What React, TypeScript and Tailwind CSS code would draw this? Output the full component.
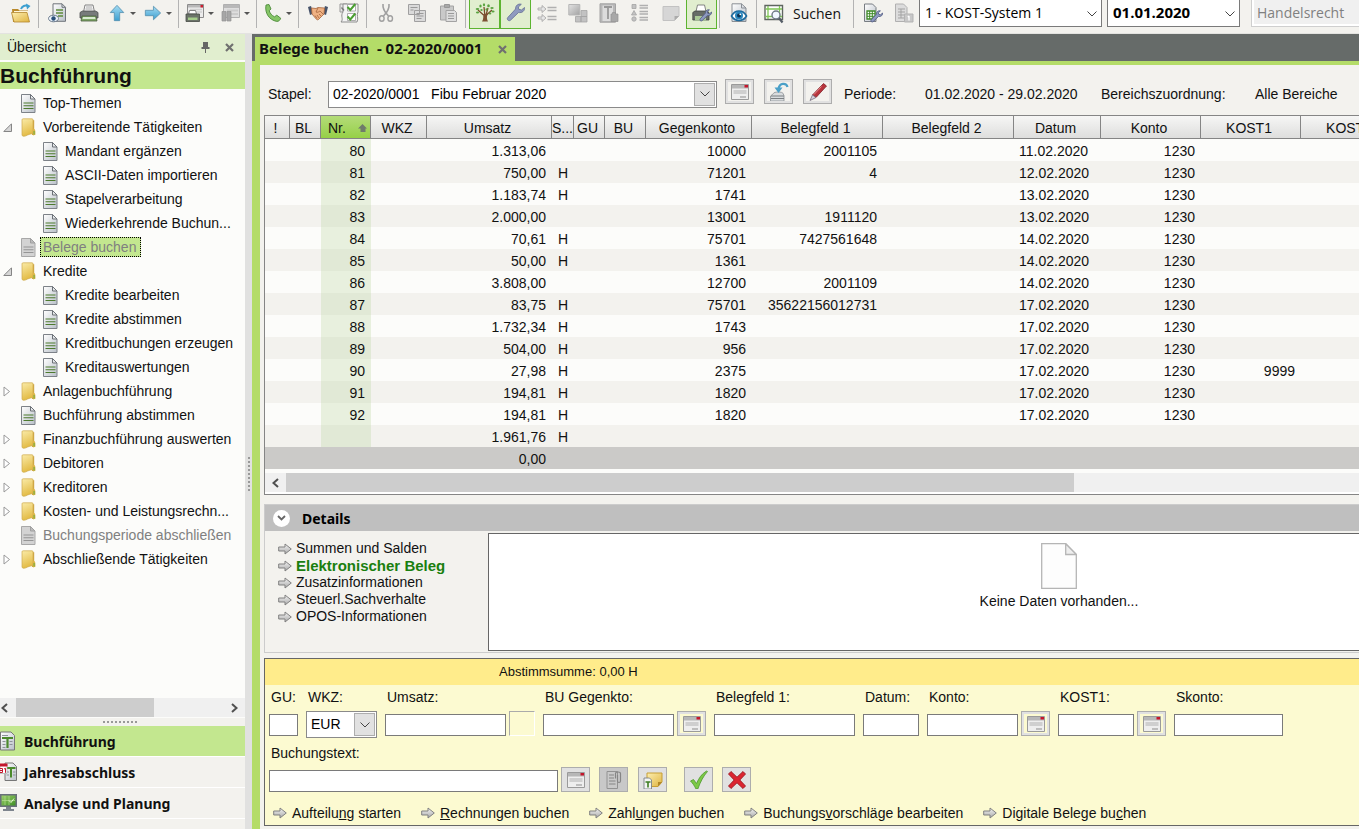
import React from "react";
import type { ReactNode } from "react";
import { clsx } from "clsx";

/* ---------- Icons ---------- */

function Svg({ size = 20, children, box = "0 0 20 20" }: { size?: number; children: ReactNode; box?: string }) {
  return (
    <svg width={size} height={size} viewBox={box} aria-hidden="true" className="block shrink-0" fill="none">
      {children}
    </svg>
  );
}

function Gradients() {
  return (
    <svg width="0" height="0" className="absolute" aria-hidden="true">
      <defs>
        <linearGradient id="paper" x1="0" y1="0" x2="1" y2="1">
          <stop offset="0" stopColor="#ffffff" />
          <stop offset="1" stopColor="#b9c0c8" />
        </linearGradient>
        <linearGradient id="gray" x1="0" y1="0" x2="1" y2="1">
          <stop offset="0" stopColor="#e2e2e2" />
          <stop offset="1" stopColor="#a3a3a3" />
        </linearGradient>
        <linearGradient id="gold" x1="0" y1="0" x2="1" y2="1">
          <stop offset="0" stopColor="#fdeeb0" />
          <stop offset="1" stopColor="#dfb440" />
        </linearGradient>
        <linearGradient id="folder" x1="0" y1="0" x2="0.3" y2="1">
          <stop offset="0" stopColor="#faeba8" />
          <stop offset="1" stopColor="#e3bb45" />
        </linearGradient>
        <linearGradient id="blue" x1="0" y1="0" x2="0" y2="1">
          <stop offset="0" stopColor="#a5dcf3" />
          <stop offset="1" stopColor="#3c9fd0" />
        </linearGradient>
        <linearGradient id="leaf" x1="0" y1="0" x2="1" y2="1">
          <stop offset="0" stopColor="#9cd06a" />
          <stop offset="1" stopColor="#3f8f25" />
        </linearGradient>
        <linearGradient id="arrow" x1="0" y1="0" x2="0" y2="1">
          <stop offset="0" stopColor="#f4f4f4" />
          <stop offset="1" stopColor="#a9a9a9" />
        </linearGradient>
      </defs>
    </svg>
  );
}

const FolderOpen = () => (
  <Svg>
    <path d="M1 6h6l1.5 1.5H17V19H2z" fill="#b98a2c" />
    <path d="M3 8h14v5H3z" fill="#fff6d8" />
    <path d="M.5 9.5H16L18.5 19H3z" fill="url(#gold)" stroke="#b3872e" strokeWidth=".8" />
    <path d="M10 6c1-3 4-4 7-3" stroke="#3c9fd0" strokeWidth="2" />
    <path d="M15 .5 19.5 3 16 6.5z" fill="#3c9fd0" />
  </Svg>
);
const DocEye = () => (
  <Svg>
    <path d="M5 .8h9l3.5 3.5v14H5z" fill="url(#paper)" stroke="#6f747a" />
    <path d="M14 .8v3.5h3.5" stroke="#6f747a" />
    <path d="M8 7h7M8 10h7M10 13h5" stroke="#5d8a3a" strokeWidth="1.3" />
    <ellipse cx="5.5" cy="15.5" rx="5" ry="3.3" fill="#eef4fa" stroke="#6b7a8c" />
    <circle cx="5.5" cy="15.5" r="2.2" fill="#2a4f7a" />
  </Svg>
);
const Printer = () => (
  <Svg>
    <path d="M4.5 9 6 2h8l1.500 7z" fill="#f7f7f7" stroke="#777" strokeWidth=".9" />
    <path d="M7 4h6M6.500 6h7" stroke="#aaa" />
    <path d="M1 9.500 3.500 8h13L19 9.500V15H1z" fill="#777b7b" stroke="#4a4d4d" strokeWidth=".8" />
    <path d="M3 13h14l1 5H2z" fill="#7ea766" stroke="#4a5a40" strokeWidth=".8" />
    <path d="M4 14h12l.5 2h-13z" fill="#d7ead0" />
  </Svg>
);
const ArrowUp = () => (
  <Svg size={18}>
    <path d="M10 1.500 17.500 9.500H13v9H7v-9H2.500z" fill="url(#blue)" stroke="#5690ae" strokeWidth=".9" />
  </Svg>
);
const ArrowRight = () => (
  <Svg size={18}>
    <path d="M18.500 10 10.500 2.500V7H1.500v6h9v4.500z" fill="url(#blue)" stroke="#5690ae" strokeWidth=".9" />
  </Svg>
);
const WindowPrint = () => (
  <Svg>
    <path d="M2.500 1.500h16v13h-16z" fill="#ececec" stroke="#8c8c8c" />
    <path d="M3 2h15v2.500H3z" fill="#b8b8b8" />
    <path d="M15.500 2H18v2.500h-2.500z" fill="#cc1f2f" />
    <path d="M5 6.500h12M5 9h12" stroke="#d0d0d0" strokeWidth="1.500" />
    <path d="M3.500 11 4.500 7.500h6L11.500 11z" fill="#fff" stroke="#666" strokeWidth=".8" />
    <path d="M1 11h13.500v7.500H1z" fill="#6b7369" stroke="#454a44" strokeWidth=".8" />
    <path d="M3 14.500h9.500v2.500H3z" fill="#a5cd8a" />
  </Svg>
);
const WindowGray = () => (
  <Svg>
    <path d="M2.500 1.500h16v13h-16z" fill="#dedede" stroke="#b0b0b0" />
    <path d="M3 2h15v3H3z" fill="#b8b8b8" />
    <path d="M6 7.500h11M6 11h11" stroke="#cbcbcb" strokeWidth="1.800" />
    <path d="M1 8.500h4v9.500H1zM6 8.500h4v9.500H6z" fill="#a6a6a6" stroke="#929292" strokeWidth=".7" />
  </Svg>
);
const Phone = () => (
  <Svg>
    <path
      d="M3 2 6 1.500 8 6 6.200 7.700c.8 2.600 2.600 4.800 5.300 6.100l2.300-1.600 3.900 3c-.6 2-1.900 3.300-4 3.200C6.500 17 1.500 10.500 3 2z"
      fill="#85c566"
      stroke="#4c8a3a"
      strokeWidth=".9"
    />
  </Svg>
);
const Handshake = () => (
  <Svg>
    <path d="M0 4 3 3 5.500 10.500 2 12z" fill="#46536a" />
    <path d="m20 4-3-1-2.500 7.500L18 12z" fill="#46536a" />
    <path
      d="M3.500 5 8 5.500l2-1 6.500.5-.5 6-5.500 5.500c-1 .8-2 0-2.500-.7L4 11z"
      fill="#efb183"
      stroke="#a4653c"
      strokeWidth=".8"
    />
    <path d="M10 5 8 9c1.500 1 3-.5 4-1l3.500 3.500M9 15.500l-2-3M11 15l-2-3M13 13l-2-2" stroke="#a4653c" strokeWidth=".8" />
  </Svg>
);
const Checklist = () => (
  <Svg>
    <path d="M1 1h7v8H1z" fill="#e7e7e7" stroke="#999" />
    <path d="M4 1h15v8c-2 3 1 6-1 10H2c3-3-1-6 2-10z" fill="#f4f4f4" stroke="#8d8d8d" />
    <path d="M8.500 1.500h8v6.500h-8zM8.500 10.500h8V17.500h-8z" fill="#fff" stroke="#999" strokeWidth=".8" />
    <path d="m8.500 4 2.800 3 5-6M8.500 13.500l2.800 3 5-6" stroke="#4a9f30" strokeWidth="2" />
    <path d="M2.500 4.500 5 7.500" stroke="#777" strokeWidth="1.300" />
  </Svg>
);
const Scissors = () => (
  <Svg>
    <path d="M7 1c-.5 4 1.500 8 5.500 12M13 1c.5 4-1.500 8-5.500 12" stroke="#a0a0a0" strokeWidth="1.600" />
    <ellipse cx="5.800" cy="15.500" rx="2.300" ry="2.800" stroke="#a0a0a0" strokeWidth="1.400" />
    <ellipse cx="14.200" cy="15.500" rx="2.300" ry="2.800" stroke="#a0a0a0" strokeWidth="1.400" />
  </Svg>
);
const Copy = () => (
  <Svg>
    <path d="M1.500 1.500h11v10h-11zM7.500 7.500h11v11h-11z" fill="#dadada" stroke="#a0a0a0" />
    <path d="M3.500 4.500h7M3.500 7h3M9.500 10.500h7M9.500 13h7M9.500 15.500h5" stroke="#999" />
  </Svg>
);
const Paste = () => (
  <Svg>
    <path d="M2.500 3h13v14h-13z" fill="#c9c9c9" stroke="#a3a3a3" />
    <path d="M6.500 1.500h5v3h-5z" fill="#a8a8a8" stroke="#979797" />
    <path d="M8 7.500h8.500l2 2v9H8z" fill="#dedede" stroke="#a3a3a3" />
    <path d="M10 10.500h6M10 13h6M10 15.500h6" stroke="#999" />
  </Svg>
);
const Tree = () => (
  <Svg>
    <path d="M8.500 12 3 7M9.800 12 9 4M11.500 12 17 7M11 12l2-7" stroke="#7a4d2b" strokeWidth="1.300" />
    <path d="M8 11h4.500c-.8 2.500-.8 5 .5 7.500H7c1.500-2.500 1.500-5 1-7.500z" fill="#7d5132" />
    <g fill="#5aa340">
      <ellipse cx="2.500" cy="6" rx="1.800" ry="1.100" /><ellipse cx="5.500" cy="3" rx="1.200" ry="1.500" /><ellipse cx="9" cy="1.800" rx="1.100" ry="1.500" />
      <ellipse cx="13.500" cy="2.800" rx="1.300" ry="1.500" /><ellipse cx="17" cy="5" rx="1.700" ry="1.100" /><ellipse cx="18" cy="8.500" rx="1.600" ry="1" />
      <ellipse cx="6.500" cy="7" rx="1.200" ry="1" /><ellipse cx="2.500" cy="9.500" rx="1.600" ry="1" /><ellipse cx="11.500" cy="6.500" rx="1" ry="1.300" />
      <ellipse cx="15" cy="10.500" rx="1.300" ry=".9" />
    </g>
  </Svg>
);
const wrenchPath =
  "M18.500 4.500 15.500 7l-2.700-.7L12.300 4l3-2.700c-3-.9-6 1.200-5.700 4.700L1.800 14.500c-1.500 1.600.8 4.300 2.700 2.700l8-7.700c3.500.7 6.500-1.700 6-5z";
const Wrench = () => (
  <Svg>
    <path d={wrenchPath} fill="#8f9bc0" stroke="#6c7699" strokeWidth=".9" />
  </Svg>
);
const ListArrows = () => (
  <Svg>
    <path d="M1 5h4V2.500L9 6 5 9.500V7H1zM1 14h4v-2.500L9 15l-4 3.500V16H1z" fill="#e6e6e6" stroke="#a3a3a3" strokeWidth=".8" />
    <path d="M10.500 4.500h9M10.500 7.500h9M10.500 13.500h9M10.500 16.500h9" stroke="#b0b0b0" strokeWidth="1.400" />
  </Svg>
);
const Blocks = () => (
  <Svg>
    <path d="M.8 1.500h11v10.500H.8z" fill="url(#gray)" stroke="#b5b5b5" />
    <path d="M13 7.500h6v6h-6zM7.500 13.500h5.500v5.500h-5.500zM13 13.500h6V19h-6z" fill="#c2c2c2" stroke="#a5a5a5" strokeWidth=".8" />
  </Svg>
);
const TextPage = () => (
  <Svg>
    <path d="M1 .8h15.500v18.400H1z" fill="#b8b8b8" stroke="#a3a3a3" />
    <path d="M3.500 2.500h10.500V18H3.500z" fill="#dcdcdc" />
    <path d="M5 4h8M9 4v12" stroke="#989898" strokeWidth="1.800" />
    <path d="M12 11h1.500V9.500h3V11H19v7.500h-7z" fill="#a8a8a8" stroke="#949494" strokeWidth=".7" />
  </Svg>
);
const ShapesList = () => (
  <Svg>
    <path d="M2 1.500h4v4H2zM4 7.500 6.500 12h-5z" fill="#c2c2c2" stroke="#a3a3a3" strokeWidth=".8" />
    <circle cx="4" cy="16" r="2.200" fill="#c2c2c2" stroke="#a3a3a3" strokeWidth=".8" />
    <path d="M9.500 2.500H18M9.500 5H18M9.500 8.500H18M9.500 11H18M9.500 14.500H18M9.500 17H18" stroke="#b0b0b0" strokeWidth="1.300" />
  </Svg>
);
const Note = () => (
  <Svg>
    <path d="M2 3.500h16V13l-4.500 4.500H2z" fill="#d6d6d6" stroke="#c2c2c2" />
    <path d="M18 13h-4.500v4.500z" fill="#ababab" />
  </Svg>
);
const PrinterWrench = () => (
  <Svg>
    <path d="M4 8.500 5.500 2h7l1.500 6.500z" fill="#fff" stroke="#777" strokeWidth=".9" />
    <path d="M.8 9.500 3 8h12l2 1.500V17H.8z" fill="#666c66" stroke="#3f443f" strokeWidth=".8" />
    <path d="M3 13h11v4.500H3z" fill="#a9c996" />
    <g transform="translate(7 6) scale(.68)">
      <path d={wrenchPath} fill="#8f9bc0" stroke="#566087" strokeWidth="1.300" />
    </g>
  </Svg>
);
const DocEyeBlue = () => (
  <Svg>
    <path d="M3 .8h9.500L17 5v13.500H3z" fill="url(#paper)" stroke="#8a8f95" />
    <path d="M12.500.8V5H17" stroke="#8a8f95" />
    <path d="M2.500 13c3.500-6.500 11.500-6.500 15 0-3.500 6-11.500 6-15 0z" fill="#fff" stroke="#1e6b9e" strokeWidth="1.600" />
    <circle cx="10" cy="12.500" r="4" fill="#2b87bd" />
    <circle cx="10" cy="12.500" r="2" fill="#0c3455" />
    <circle cx="11.300" cy="11.300" r=".9" fill="#fff" />
  </Svg>
);
const SearchWindow = () => (
  <Svg>
    <path d="M1 1.500h17.500v14H1z" fill="#fff" stroke="#5f6660" strokeWidth="1.400" />
    <path d="M4 2v13M1.500 5H18M15.500 2v13M1.500 12.500H18" stroke="#7fc556" strokeWidth="1.300" />
    <circle cx="12" cy="11" r="4" fill="#f0f7ff" stroke="#6f7a86" strokeWidth="1.400" />
    <path d="m15 14 3.500 4.500" stroke="#555d66" strokeWidth="2.200" />
  </Svg>
);
const SheetWrench = () => (
  <Svg>
    <path d="M1.500 1h8L13 4.500v14H1.500z" fill="url(#paper)" stroke="#777c82" />
    <path d="M4 8h8v8H4z" fill="#fff" stroke="#3f8a28" strokeWidth="1.300" />
    <path d="M4 10.700h8M4 13.300h8M6.700 8v8M9.300 8v8" stroke="#3f8a28" />
    <g transform="translate(7 7) scale(.68)">
      <path d={wrenchPath} fill="#8f9bc0" stroke="#566087" strokeWidth="1.300" />
    </g>
  </Svg>
);
const SheetGray = () => (
  <Svg>
    <path d="M1.500 1h8L13 4.500v14H1.500z" fill="#dcdcdc" stroke="#b0b0b0" />
    <path d="M4 6h7M4 9h7M4 12h7M4 15h7M7 6v9" stroke="#a3a3a3" />
    <path d="M10.500 11h8.500v8h-8.500z" fill="#c8c8c8" stroke="#b3b3b3" />
    <path d="M15 13v4.500M13.800 14 15 13" stroke="#fff" strokeWidth="1.300" />
  </Svg>
);

const PageIcon = ({ disabled }: { disabled?: boolean }) => (
  <svg width="15" height="19" viewBox="0 0 15 19" aria-hidden="true" className="block shrink-0" fill="none">
    <path d="M.5.5h9L14 5v13.500H.5z" fill={disabled ? "#d3d3d3" : "url(#paper)"} stroke={disabled ? "#a8a8a8" : "#7d8288"} />
    <path d="M9.500.5V5H14z" fill={disabled ? "#bbb" : "#e5e8ea"} stroke={disabled ? "#a0a0a0" : "#6c7177"} />
    <path d="M2.500 9h10M2.500 11.700h10M2.500 14.500h10" stroke={disabled ? "#959595" : "#4d7a2e"} strokeWidth="1.100" />
  </svg>
);
const FolderIcon = () => (
  <svg width="15" height="19" viewBox="0 0 15 19" aria-hidden="true" className="block shrink-0">
    <path d="M11 2.200h2.200V17H11z" fill="#cfa63f" />
    <path d="M1 1.800c0-.8.500-1 1.200-1H11c.7 0 1 .3 1 1v13.700c-3 .5-5 1.200-7 2.300-1.800.8-4 .5-4-.8z" fill="url(#folder)" stroke="#cfab4e" strokeWidth=".7" />
    <path d="M12 10.500c2 .3 2.500 2 2.400 4v2.300L12 17.500z" fill="#dcb548" />
    <path d="M12.500 13h1.200v3.500h-1.200z" fill="#7fae3c" />
  </svg>
);
const CardIcon = () => (
  <svg width="18" height="16" viewBox="0 0 18 16" aria-hidden="true" className="block" fill="none">
    <path d="M.5.5h17v15H.5z" fill="#eeeeee" stroke="#9a9a9a" />
    <path d="M1 1h16v3.500H1z" fill="#b7b7b7" />
    <path d="M13.500 1H17v2.500h-3.500z" fill="#c4162c" />
    <path d="M2.500 8h13" stroke="#cfcfcf" strokeWidth="4" />
    <path d="M9 13h6" stroke="#8d8d8d" />
  </svg>
);
const ImportIcon = () => (
  <Svg>
    <path d="M4.500 11.500c0-2 9.500-2 9.500 0l1 2v5.500H1.500v-5z" fill="#d9dcde" stroke="#8c9194" strokeWidth=".8" />
    <path d="M2 14h13M2 16.500h13" stroke="#7b8083" />
    <path d="M18.500 5c-1-4-8-5-9 2" stroke="#4aa0c8" strokeWidth="2.200" />
    <path d="M5.500 5.500h8L9.500 11z" fill="#4aa0c8" />
  </Svg>
);
const Pencil = () => (
  <Svg>
    <path d="M15.500 1.500 18.500 4 8 15.500 4.500 13z" fill="#b8343c" stroke="#842028" strokeWidth=".8" />
    <path d="M4.500 13 8 15.500 2 18.500z" fill="#d8d2dd" stroke="#77717f" strokeWidth=".8" />
    <path d="m13.500 4.500-7.500 8" stroke="#e58a8c" />
  </Svg>
);
const ClipPage = () => (
  <Svg>
    <path d="M3 1.500h10.500v17H3z" fill="#c9c9c9" stroke="#929292" />
    <path d="M5 5h5M5 8h5M5 11h6.500M5 14h6.500" stroke="#858585" />
    <path d="M11.500 8.500V3.500c0-2 5-2 5 0V11c0 2-3 2-3 0V5" stroke="#858585" strokeWidth="1.200" />
  </Svg>
);
const NoteDoc = () => (
  <Svg>
    <path d="M4 3h15v9l-4 4.500H4z" fill="url(#gold)" stroke="#c79f35" />
    <path d="M19 12h-4v4.500z" fill="#b28828" />
    <path d="M1 8h5.500L8.500 10v9H1z" fill="#f3f5f3" stroke="#7d8288" strokeWidth=".9" />
    <path d="M2.500 12h5M5 12v5.500" stroke="#3f7d24" strokeWidth="1.600" />
  </Svg>
);
const CheckIcon = () => (
  <Svg>
    <path d="M1.500 11 4.500 9.500 7.500 13.500C10 8 12.500 4 17.500 1l1 .5C14.500 6 11.500 11.500 8.800 19H7C5.500 16 4 13.500 1.500 11z" fill="#7cc945" stroke="#4f9830" strokeWidth=".8" />
  </Svg>
);
const CrossIcon = () => (
  <Svg>
    <path d="m4 1.500 6 5.700 6-5.700L18.500 4l-5.700 6 5.700 6-2.500 2.500-6-5.700-6 5.700L1.500 16l5.700-6-5.700-6z" fill="#dc2430" stroke="#9c1620" strokeWidth=".9" />
  </Svg>
);
const LinkArrow = () => (
  <svg width="14" height="12" viewBox="0 0 14 12" aria-hidden="true" className="block shrink-0">
    <path d="M.7 4H7V1l6.300 5L7 11V8H.7z" fill="url(#arrow)" stroke="#808080" />
  </svg>
);
const Chevron = () => (
  <svg width="10" height="6" viewBox="0 0 10 6" aria-hidden="true" fill="none">
    <path d="m.5.500 4.500 4.500L9.500.5" stroke="#444" />
  </svg>
);
const ScrollArrow = ({ right }: { right?: boolean }) => (
  <svg width="7" height="10" viewBox="0 0 7 10" aria-hidden="true" fill="none">
    <path d={right ? "m1 1 4.500 4L1 9" : "M6 1 1.500 5 6 9"} stroke="#505050" strokeWidth="2" />
  </svg>
);
const CloseX = () => (
  <svg width="9" height="9" viewBox="0 0 9 9" aria-hidden="true">
    <path d="m1 1 7 7M8 1 1 8" stroke="#707070" strokeWidth="2.200" />
  </svg>
);
const NavLedger = () => (
  <svg width="15" height="20" viewBox="0 0 15 20" aria-hidden="true" className="block" fill="none">
    <path d="M.5 1H11l3.500 3.500V19H.5z" fill="url(#paper)" stroke="#777" />
    <path d="M2 4.500h6M2.500 10.500h3M9.500 10.500h3M2.500 13.500h3M9.500 13.500h3M2.500 16.500h3" stroke="#8d9399" />
    <path d="M2 7h11M7.500 7v10" stroke="#4b8a2c" strokeWidth="2.200" />
  </svg>
);
const NavYear = () => (
  <svg width="17" height="20" viewBox="0 0 17 20" aria-hidden="true" className="block" fill="none">
    <path d="M5 1h8l3.500 3.500V18.500H5z" fill="url(#paper)" stroke="#777" />
    <path d="M6.500 6h9M11 6v9.500" stroke="#4b8a2c" strokeWidth="2" />
    <path d="M6.500 10H9M13 10h2.500M6.500 13H9M13 13h2.500" stroke="#8d9399" />
    <path d="M0 2.500h7v9H0z" fill="#fff" stroke="#aaa" strokeWidth=".7" />
    <path d="M0 1.500h7.500v3H0z" fill="#c4162c" />
    <path d="M0 6.500h2.500v4H0M0 8.500h2.500M4 7l1.500-.7v4.500" stroke="#c4162c" />
  </svg>
);
const NavMonitor = () => (
  <svg width="18" height="20" viewBox="0 0 18 20" aria-hidden="true" className="block" fill="none">
    <path d="M0 1h17v13H0z" fill="#69707a" />
    <path d="M1.500 2.500h14v10h-14z" fill="url(#leaf)" />
    <path d="M5 3v9M9 3v9M2 7.500h13" stroke="#b5dc90" strokeWidth=".7" />
    <path d="m9 7.500 2 2 3-4" stroke="#e5f6d5" />
    <path d="M6 14h5v2H6zM3 16h11v2H3z" fill="#7e858e" />
  </svg>
);

/* ---------- Toolbar ---------- */

const Separator = () => <span className="ml-[2px] mr-[3px] h-7 w-px shrink-0 bg-[#b3b3b3]" />;

function Tool({ label, active, children }: { label: string; active?: boolean; children: ReactNode }) {
  return (
    <button
      aria-label={label}
      className={clsx(
        "flex h-[29px] w-[31px] shrink-0 items-center justify-center pb-[3px]",
        active && "border-x border-b border-[#5db430] bg-[#e1eecf]",
      )}
    >
      {children}
    </button>
  );
}

function MenuTool({ label, children }: { label: string; children: ReactNode }) {
  return (
    <button aria-label={label} className="flex h-[29px] w-9 shrink-0 items-center pb-[3px]">
      <span className="flex w-[26px] justify-center">{children}</span>
      <svg width="6" height="3" viewBox="0 0 6 3" aria-hidden="true">
        <path d="M0 0h6L3 3z" fill="#555" />
      </svg>
    </button>
  );
}

function Combo({ label, value, className }: { label: string; value: string; className: string }) {
  return (
    <span className="relative block shrink-0">
      <select
        aria-label={label}
        className={clsx(
          "block h-[27px] appearance-none border border-t-0 border-[#7a7a7a] bg-white pb-[2px] pl-[5px] pr-6 font-['Open_Sans',sans-serif] text-black",
          className,
        )}
      >
        <option>{value}</option>
      </select>
      <span className="pointer-events-none absolute inset-y-0 right-[5px] flex items-center">
        <Chevron />
      </span>
    </span>
  );
}

function Toolbar() {
  return (
    <header className="flex h-[34px] shrink-0 items-start overflow-hidden border-b border-[#e3e3e0] bg-[#f3f2ee] pl-[5px]">
      <Tool label="Öffnen"><FolderOpen /></Tool>
      <Separator />
      <Tool label="Seitenansicht"><DocEye /></Tool>
      <Tool label="Drucken"><Printer /></Tool>
      <MenuTool label="Aufwärts"><ArrowUp /></MenuTool>
      <MenuTool label="Vorwärts"><ArrowRight /></MenuTool>
      <Separator />
      <MenuTool label="Fenster drucken"><WindowPrint /></MenuTool>
      <MenuTool label="Fenster anordnen"><WindowGray /></MenuTool>
      <Separator />
      <MenuTool label="Telefon"><Phone /></MenuTool>
      <Separator />
      <Tool label="Partner"><Handshake /></Tool>
      <Tool label="Checkliste"><Checklist /></Tool>
      <Separator />
      <Tool label="Ausschneiden"><Scissors /></Tool>
      <Tool label="Kopieren"><Copy /></Tool>
      <Tool label="Einfügen"><Paste /></Tool>
      <Separator />
      <Tool label="Übersichtsbaum" active><Tree /></Tool>
      <Tool label="Werkzeuge" active><Wrench /></Tool>
      <Tool label="Zeilen"><ListArrows /></Tool>
      <Tool label="Bausteine"><Blocks /></Tool>
      <Tool label="Textseite"><TextPage /></Tool>
      <Tool label="Liste"><ShapesList /></Tool>
      <Tool label="Notiz"><Note /></Tool>
      <Tool label="Druckeinstellungen" active><PrinterWrench /></Tool>
      <Separator />
      <Tool label="Beleg ansehen"><DocEyeBlue /></Tool>
      <Separator />
      <button className="flex h-[29px] w-[91px] shrink-0 items-center gap-[9px] pb-[2px] pl-1 font-['Open_Sans',sans-serif] text-[14px] text-[#111]">
        <SearchWindow />
        <span>Suchen</span>
      </button>
      <Separator />
      <Tool label="Tabelle einrichten"><SheetWrench /></Tool>
      <Tool label="Tabelle"><SheetGray /></Tool>
      <Combo label="KOST-System" value="1 - KOST-System 1" className="w-[183px] text-[14px]" />
      <span className="w-[5px] shrink-0" />
      <Combo label="Datum" value="01.01.2020" className="w-[133px] text-[15px] font-bold" />
      <span className="w-[11px] shrink-0" />
      <span className="flex h-[27px] min-w-[120px] flex-1 border border-t-0 border-[#cfcfcf] bg-white p-[2px] pt-0">
        <span className="flex flex-1 items-center bg-[#f0f0f0] pl-[3px] font-['Open_Sans',sans-serif] text-[14px] text-[#808080]">
          Handelsrecht
        </span>
      </span>
    </header>
  );
}

/* ---------- Sidebar ---------- */

type Node = { text: string; kind: "page" | "folder"; level: 0 | 1; state?: "open" | "closed"; disabled?: boolean; selected?: boolean };

const nodes: Node[] = [
  { text: "Top-Themen", kind: "page", level: 0 },
  { text: "Vorbereitende Tätigkeiten", kind: "folder", level: 0, state: "open" },
  { text: "Mandant ergänzen", kind: "page", level: 1 },
  { text: "ASCII-Daten importieren", kind: "page", level: 1 },
  { text: "Stapelverarbeitung", kind: "page", level: 1 },
  { text: "Wiederkehrende Buchun...", kind: "page", level: 1 },
  { text: "Belege buchen", kind: "page", level: 0, disabled: true, selected: true },
  { text: "Kredite", kind: "folder", level: 0, state: "open" },
  { text: "Kredite bearbeiten", kind: "page", level: 1 },
  { text: "Kredite abstimmen", kind: "page", level: 1 },
  { text: "Kreditbuchungen erzeugen", kind: "page", level: 1 },
  { text: "Kreditauswertungen", kind: "page", level: 1 },
  { text: "Anlagenbuchführung", kind: "folder", level: 0, state: "closed" },
  { text: "Buchführung abstimmen", kind: "page", level: 0 },
  { text: "Finanzbuchführung auswerten", kind: "folder", level: 0, state: "closed" },
  { text: "Debitoren", kind: "folder", level: 0, state: "closed" },
  { text: "Kreditoren", kind: "folder", level: 0, state: "closed" },
  { text: "Kosten- und Leistungsrechn...", kind: "folder", level: 0, state: "closed" },
  { text: "Buchungsperiode abschließen", kind: "page", level: 0, disabled: true },
  { text: "Abschließende Tätigkeiten", kind: "folder", level: 0, state: "closed" },
];

function Expander({ state }: { state?: "open" | "closed" }) {
  return (
    <span className="flex w-[21px] shrink-0 pl-[3px]">
      {state === "open" && (
        <svg width="9" height="9" viewBox="0 0 9 9" aria-hidden="true">
          <path d="M8.500.8v7.700H.8z" fill="#d6d6d6" stroke="#858585" />
        </svg>
      )}
      {state === "closed" && (
        <svg width="8" height="11" viewBox="0 0 8 11" aria-hidden="true">
          <path d="M1 1v9l5.500-4.500z" fill="#fff" stroke="#999" />
        </svg>
      )}
    </span>
  );
}

function Sidebar() {
  return (
    <aside className="flex w-[245px] shrink-0 flex-col bg-[#fcfcfa]">
      <div className="flex h-[26px] shrink-0 items-center bg-[#e1eecf] pl-[7px] pr-[11px] text-[14px]">
        <span className="flex-1">Übersicht</span>
        <button aria-label="Anheften" className="mr-[15px]">
          <svg width="9" height="11" viewBox="0 0 9 11" aria-hidden="true">
            <path d="M2 0h5v5h1.500v2H5v4H4V7H.5V5H2z" fill="#666" />
          </svg>
        </button>
        <button aria-label="Schließen"><CloseX /></button>
      </div>
      <h2 className="mt-[2px] h-[27px] shrink-0 bg-[#c3e78f] text-[21px] font-bold leading-[28px] text-[#111]">Buchführung</h2>
      <ul className="min-h-0 flex-1 overflow-hidden pt-[2px]">
        {nodes.map((n) => (
          <li key={n.text} className={clsx("flex h-6 items-center", n.level === 1 && "pl-[22px]")}>
            <Expander state={n.state} />
            {n.kind === "folder" ? <FolderIcon /> : <PageIcon disabled={n.disabled} />}
            <a
              href="#"
              className={clsx(
                "ml-1 whitespace-nowrap border border-dotted px-[2px] text-[14px] leading-[18px]",
                n.selected ? "border-black bg-[#c3e78f] pr-1" : "border-transparent",
                n.disabled && "text-[#808080]",
              )}
            >
              {n.text}
            </a>
          </li>
        ))}
      </ul>
      <div className="flex h-[19px] shrink-0 items-center bg-[#f0f0f0]">
        <span className="flex w-4 pl-[1px]"><ScrollArrow /></span>
        <span className="h-full w-[138px] bg-[#cdcdcd]" />
        <span className="ml-auto flex pr-[7px]"><ScrollArrow right /></span>
      </div>
      <div className="mt-[1px] flex h-2 shrink-0 items-center justify-center bg-[#f3f2ee] pr-[6px]">
        <span className="w-[34px] border-t-2 border-dotted border-[#999]" />
      </div>
      <nav className="h-[103px] shrink-0 overflow-hidden bg-[#f3f2ee] font-['Noto_Sans',sans-serif] text-[14px] font-bold">
        <a href="#" className="flex h-[31px] items-center border-b border-white bg-[#c3e78f]">
          <span className="w-6"><NavLedger /></span>Buchführung
        </a>
        <a href="#" className="flex h-[31px] items-center border-b border-white">
          <span className="w-6"><NavYear /></span>Jahresabschluss
        </a>
        <a href="#" className="flex h-[31px] items-center border-b border-white">
          <span className="w-6"><NavMonitor /></span>Analyse und Planung
        </a>
      </nav>
    </aside>
  );
}

/* ---------- Postings table ---------- */

type Row = { nr: string; amount: string; side: string; account: string; doc: string; date: string; konto: string; cost: string };
const row = (nr: string, amount: string, side: string, account: string, doc: string, date: string, konto = "1230", cost = ""): Row => ({
  nr, amount, side, account, doc, date, konto, cost,
});

const rows: Row[] = [
  row("80", "1.313,06", "", "10000", "2001105", "11.02.2020"),
  row("81", "750,00", "H", "71201", "4", "12.02.2020"),
  row("82", "1.183,74", "H", "1741", "", "13.02.2020"),
  row("83", "2.000,00", "", "13001", "1911120", "13.02.2020"),
  row("84", "70,61", "H", "75701", "7427561648", "14.02.2020"),
  row("85", "50,00", "H", "1361", "", "14.02.2020"),
  row("86", "3.808,00", "", "12700", "2001109", "14.02.2020"),
  row("87", "83,75", "H", "75701", "35622156012731", "17.02.2020"),
  row("88", "1.732,34", "H", "1743", "", "17.02.2020"),
  row("89", "504,00", "H", "956", "", "17.02.2020"),
  row("90", "27,98", "H", "2375", "", "17.02.2020", "1230", "9999"),
  row("91", "194,81", "H", "1820", "", "17.02.2020"),
  row("92", "194,81", "H", "1820", "", "17.02.2020"),
  row("", "1.961,76", "H", "", "", "", ""),
  row("", "0,00", "", "", "", "", ""),
];

const columns: [string, string][] = [
  ["!", "w-[25px]"], ["BL", "w-[31px]"], ["Nr.", "w-[50px]"], ["WKZ", "w-[56px]"], ["Umsatz", "w-[125px]"],
  ["S...", "w-[22px]"], ["GU", "w-[31px]"], ["BU", "w-[41px]"], ["Gegenkonto", "w-[106px]"], ["Belegfeld 1", "w-[131px]"],
  ["Belegfeld 2", "w-[131px]"], ["Datum", "w-[87px]"], ["Konto", "w-[100px]"], ["KOST1", "w-[100px]"], ["KOST2", "w-[100px]"],
];

const right = "p-0 pr-[6px] pt-[2px] text-right";

function Postings() {
  return (
    <section className="shrink-0 overflow-hidden border border-r-0 border-[#858585] bg-[#fcfcfa]">
      <div className="overflow-hidden">
        <table className="w-[1136px] table-fixed border-separate border-spacing-0 text-[14px] leading-5">
          <thead>
            <tr className="h-[23px]">
              {columns.map(([name, width]) => (
                <th
                  key={name}
                  className={clsx(
                    "whitespace-nowrap border-b border-r border-[#858585] p-0 pr-[3px] pt-[2px] text-center font-normal",
                    width,
                    name === "Nr." ? "bg-linear-to-b from-[#b4dc78] to-[#96d046]" : "bg-linear-to-b from-[#f6f6f5] to-[#dededd]",
                  )}
                >
                  {name === "Nr." ? (
                    <span className="flex items-center justify-between pl-[7px]">
                      Nr.
                      <svg width="9" height="8" viewBox="0 0 9 8" aria-hidden="true">
                        <path d="M4.500 0 9 4.500H7.500V8h-5V4.500H0z" fill="#6f7c6a" />
                      </svg>
                    </span>
                  ) : (
                    name
                  )}
                </th>
              ))}
            </tr>
          </thead>
          <tbody>
            {rows.map((r, i) => {
              const last = i === rows.length - 1;
              const odd = i % 2 === 1;
              return (
                <tr key={i} className={clsx("h-[22px]", last ? "bg-[#cbcac8]" : odd ? "bg-[#f3f2ee]" : "bg-[#fcfcfa]")}>
                  <td />
                  <td />
                  <td className={clsx(right, !last && (odd ? "bg-[#e1e9d6]" : "bg-[#e8f0de]"))}>{r.nr}</td>
                  <td />
                  <td className={right}>{r.amount}</td>
                  <td className="p-0 pl-[6px] pt-[2px]">{r.side}</td>
                  <td />
                  <td />
                  <td className={right}>{r.account}</td>
                  <td className={right}>{r.doc}</td>
                  <td />
                  <td className="p-0 pl-[5px] pt-[2px]">{r.date}</td>
                  <td className={right}>{r.konto}</td>
                  <td className={right}>{r.cost}</td>
                  <td />
                </tr>
              );
            })}
          </tbody>
        </table>
      </div>
      <div className="mt-1 flex h-[21px] items-center border-b-2 border-white bg-[#f0f0f0]">
        <span className="flex w-[21px] justify-center"><ScrollArrow /></span>
        <span className="h-full w-[72%] bg-[#cdcdcd]" />
      </div>
    </section>
  );
}

/* ---------- Details ---------- */

const detailLinks = ["Summen und Salden", "Elektronischer Beleg", "Zusatzinformationen", "Steuerl.Sachverhalte", "OPOS-Informationen"];

function Details() {
  return (
    <section className="mt-[9px] flex min-h-0 flex-1 flex-col border border-r-0 border-[#cccccc]">
      <h3 className="flex h-[26px] shrink-0 items-center bg-[#bfbfbf] pl-2 font-['Noto_Sans',sans-serif] text-[14px] font-bold text-black">
        <button aria-label="Details einklappen" className="mr-3 flex size-[17px] items-center justify-center rounded-full bg-white">
          <svg width="9" height="6" viewBox="0 0 9 6" aria-hidden="true" fill="none">
            <path d="m1 1 3.500 3.500L8 1" stroke="#666" strokeWidth="1.800" />
          </svg>
        </button>
        Details
      </h3>
      <div className="flex min-h-0 flex-1 pb-[1px] pt-[2px]">
        <ul className="w-[223px] shrink-0 pl-[13px] pt-[7px] text-[14px] leading-[17px]">
          {detailLinks.map((t) => (
            <li key={t}>
              <a href="#" className={clsx("flex items-center gap-1", t === "Elektronischer Beleg" && "text-[15px] font-bold leading-[17px] text-[#1a7f0f]")}>
                <LinkArrow />
                {t}
              </a>
            </li>
          ))}
        </ul>
        <div className="flex flex-1 flex-col items-center overflow-hidden border border-r-0 border-[#666] bg-white pl-[270px] pt-[9px]">
          <svg width="36" height="46" viewBox="0 0 36 46" aria-hidden="true" fill="none">
            <path d="M.7.7h24L35.300 11.500v33.800H.7z" fill="#fdfdfd" stroke="#b5b5b5" strokeWidth="1.300" />
            <path d="M24.700.7v10.800h10.600z" fill="#eee" stroke="#b5b5b5" strokeWidth="1.300" />
          </svg>
          <p className="mt-[3px] whitespace-nowrap text-[14px] leading-[18px]">Keine Daten vorhanden...</p>
        </div>
      </div>
    </section>
  );
}

/* ---------- Entry form ---------- */

function IconButton({ label, tone = "plain", children }: { label: string; tone?: "plain" | "muted" | "light" | "yellow"; children: ReactNode }) {
  return (
    <button
      type="button"
      aria-label={label}
      className={clsx(
        "flex h-[25px] w-[29px] shrink-0 border border-[#adadad] p-[2px]",
        tone === "muted" ? "bg-[#c8c8c8]" : "bg-[#e1e1e1]",
      )}
    >
      <span
        className={clsx(
          "flex h-full w-full items-center justify-center overflow-hidden",
          tone === "light" && "bg-[#f3f2ee]",
          tone === "yellow" && "bg-[#fcfad1]",
        )}
      >
        {children}
      </span>
    </button>
  );
}

function Field({ id, label, width, children }: { id: string; label: string; width: string; children?: ReactNode }) {
  return (
    <div className="shrink-0">
      <label htmlFor={id} className="block whitespace-nowrap pl-[2px] leading-6">{label}</label>
      <div className="flex h-[27px] items-end gap-[3px]">
        <input id={id} className={clsx("h-[22px] border border-[#7a7a7a] bg-white px-1", width)} />
        {children}
      </div>
    </div>
  );
}

const BoxSelect = ({ id, value, className }: { id: string; value: string; className: string }) => (
  <span className="relative block shrink-0">
    <select id={id} className={clsx("block h-[27px] appearance-none border border-[#8a8a8a] bg-white pl-1 text-[14px] text-black", className)}>
      <option>{value}</option>
    </select>
    <span className="pointer-events-none absolute inset-y-[2px] right-[2px] flex w-[21px] items-center justify-center border border-[#adadad] bg-[#e1e1e1]">
      <Chevron />
    </span>
  </span>
);

const actions: [string, string, string][] = [
  ["Aufteilu", "n", "g starten"],
  ["", "R", "echnungen buchen"],
  ["Zahl", "u", "ngen buchen"],
  ["Buchungs", "v", "orschläge bearbeiten"],
  ["Digitale Belege bu", "c", "hen"],
];

function EntryForm() {
  return (
    <form className="mt-[5px] h-[168px] shrink-0 overflow-hidden border border-r-0 border-[#666] bg-[#fcfad1] text-[14px]">
      <p className="h-[26px] bg-[#ffec8b] pl-[234px] text-[13px] leading-[26px]">Abstimmsumme: 0,00 H</p>
      <div className="flex gap-2 pl-1">
        <Field id="gu" label="GU:" width="w-[29px]" />
        <div className="shrink-0">
          <label htmlFor="wkz" className="block pl-[2px] leading-6">WKZ:</label>
          <div className="flex h-[27px] items-start pt-[2px]"><BoxSelect id="wkz" value="EUR" className="w-[71px]" /></div>
        </div>
        <Field id="umsatz" label="Umsatz:" width="w-[121px]">
          <span className="h-[25px] w-[26px] border border-b-white border-l-[#aaa] border-r-white border-t-[#aaa]" />
        </Field>
        <Field id="gegenkonto" label="BU Gegenkto:" width="w-[131px]">
          <IconButton label="Gegenkonto wählen" tone="yellow"><CardIcon /></IconButton>
        </Field>
        <Field id="belegfeld" label="Belegfeld 1:" width="w-[141px]" />
        <Field id="datum" label="Datum:" width="w-[56px]" />
        <Field id="konto" label="Konto:" width="w-[91px]">
          <IconButton label="Konto wählen" tone="yellow"><CardIcon /></IconButton>
        </Field>
        <Field id="kost1" label="KOST1:" width="w-[76px]">
          <IconButton label="Kostenstelle wählen" tone="yellow"><CardIcon /></IconButton>
        </Field>
        <Field id="skonto" label="Skonto:" width="w-[109px]" />
      </div>
      <div className="mt-[5px] flex items-end pl-1">
        <Field id="buchungstext" label="Buchungstext:" width="w-[289px]">
          <IconButton label="Buchungstext wählen"><CardIcon /></IconButton>
        </Field>
        <div className="ml-[9px] flex items-end gap-[10px]">
          <IconButton label="Beleg anhängen" tone="muted"><ClipPage /></IconButton>
          <IconButton label="Notiz"><NoteDoc /></IconButton>
        </div>
        <div className="ml-[17px] flex items-end gap-[9px]">
          <IconButton label="Übernehmen"><CheckIcon /></IconButton>
          <IconButton label="Verwerfen"><CrossIcon /></IconButton>
        </div>
      </div>
      <div className="mt-[11px] flex gap-5 pl-2">
        {actions.map(([a, key, b]) => (
          <a key={b} href="#" className="flex items-center gap-[5px] whitespace-nowrap leading-5">
            <LinkArrow />
            <span>{a}<u>{key}</u>{b}</span>
          </a>
        ))}
      </div>
    </form>
  );
}

/* ---------- Page ---------- */

export default function App() {
  return (
    <div className="flex h-screen flex-col overflow-hidden bg-[#f3f2ee] font-['Liberation_Sans',Arial,sans-serif] text-[#111]">
      <Gradients />
      <Toolbar />
      <div className="flex min-h-0 flex-1">
        <Sidebar />
        <div className="flex w-[7px] shrink-0 flex-col items-center justify-center bg-[#e1e1e0] pt-[84px]">
          <span className="h-[34px] border-l-2 border-dotted border-[#999]" />
        </div>
        <main className="flex min-w-0 flex-1 flex-col bg-[#666b69]">
          <div className="ml-[3px] mt-[3px] flex h-6 w-[260px] shrink-0 items-center bg-[#b4dc68] pl-1 pr-2 font-['Noto_Sans',sans-serif] text-[15px] font-bold leading-[22px]">
            <span className="flex-1 whitespace-pre pb-[2px]">{"Belege buchen  - 02-2020/0001"}</span>
            <button aria-label="Registerkarte schließen"><CloseX /></button>
          </div>
          <div className="flex min-h-0 flex-1 flex-col border-l-8 border-t-4 border-[#b4dc68] bg-[#f3f2ee] pb-[3px] pl-1">
            <div className="flex h-[50px] shrink-0 items-center overflow-hidden whitespace-nowrap pl-1 pt-2 text-[14px]">
              <label htmlFor="stapel" className="w-[60px] shrink-0">Stapel:</label>
              <BoxSelect id="stapel" value={"02-2020/0001\u00a0\u00a0\u00a0Fibu Februar 2020"} className="w-[389px]" />
              <div className="mb-[5px] ml-2 mr-3 flex gap-[10px]">
                <IconButton label="Stapel wählen" tone="light"><CardIcon /></IconButton>
                <IconButton label="Stapel importieren" tone="light"><ImportIcon /></IconButton>
                <IconButton label="Stapel bearbeiten" tone="light"><Pencil /></IconButton>
              </div>
              <span className="w-[81px] shrink-0">Periode:</span>
              <span className="w-[176px] shrink-0">01.02.2020 - 29.02.2020</span>
              <span className="w-[154px] shrink-0">Bereichszuordnung:</span>
              <span>Alle Bereiche</span>
            </div>
            <Postings />
            <Details />
            <EntryForm />
          </div>
        </main>
      </div>
    </div>
  );
}
